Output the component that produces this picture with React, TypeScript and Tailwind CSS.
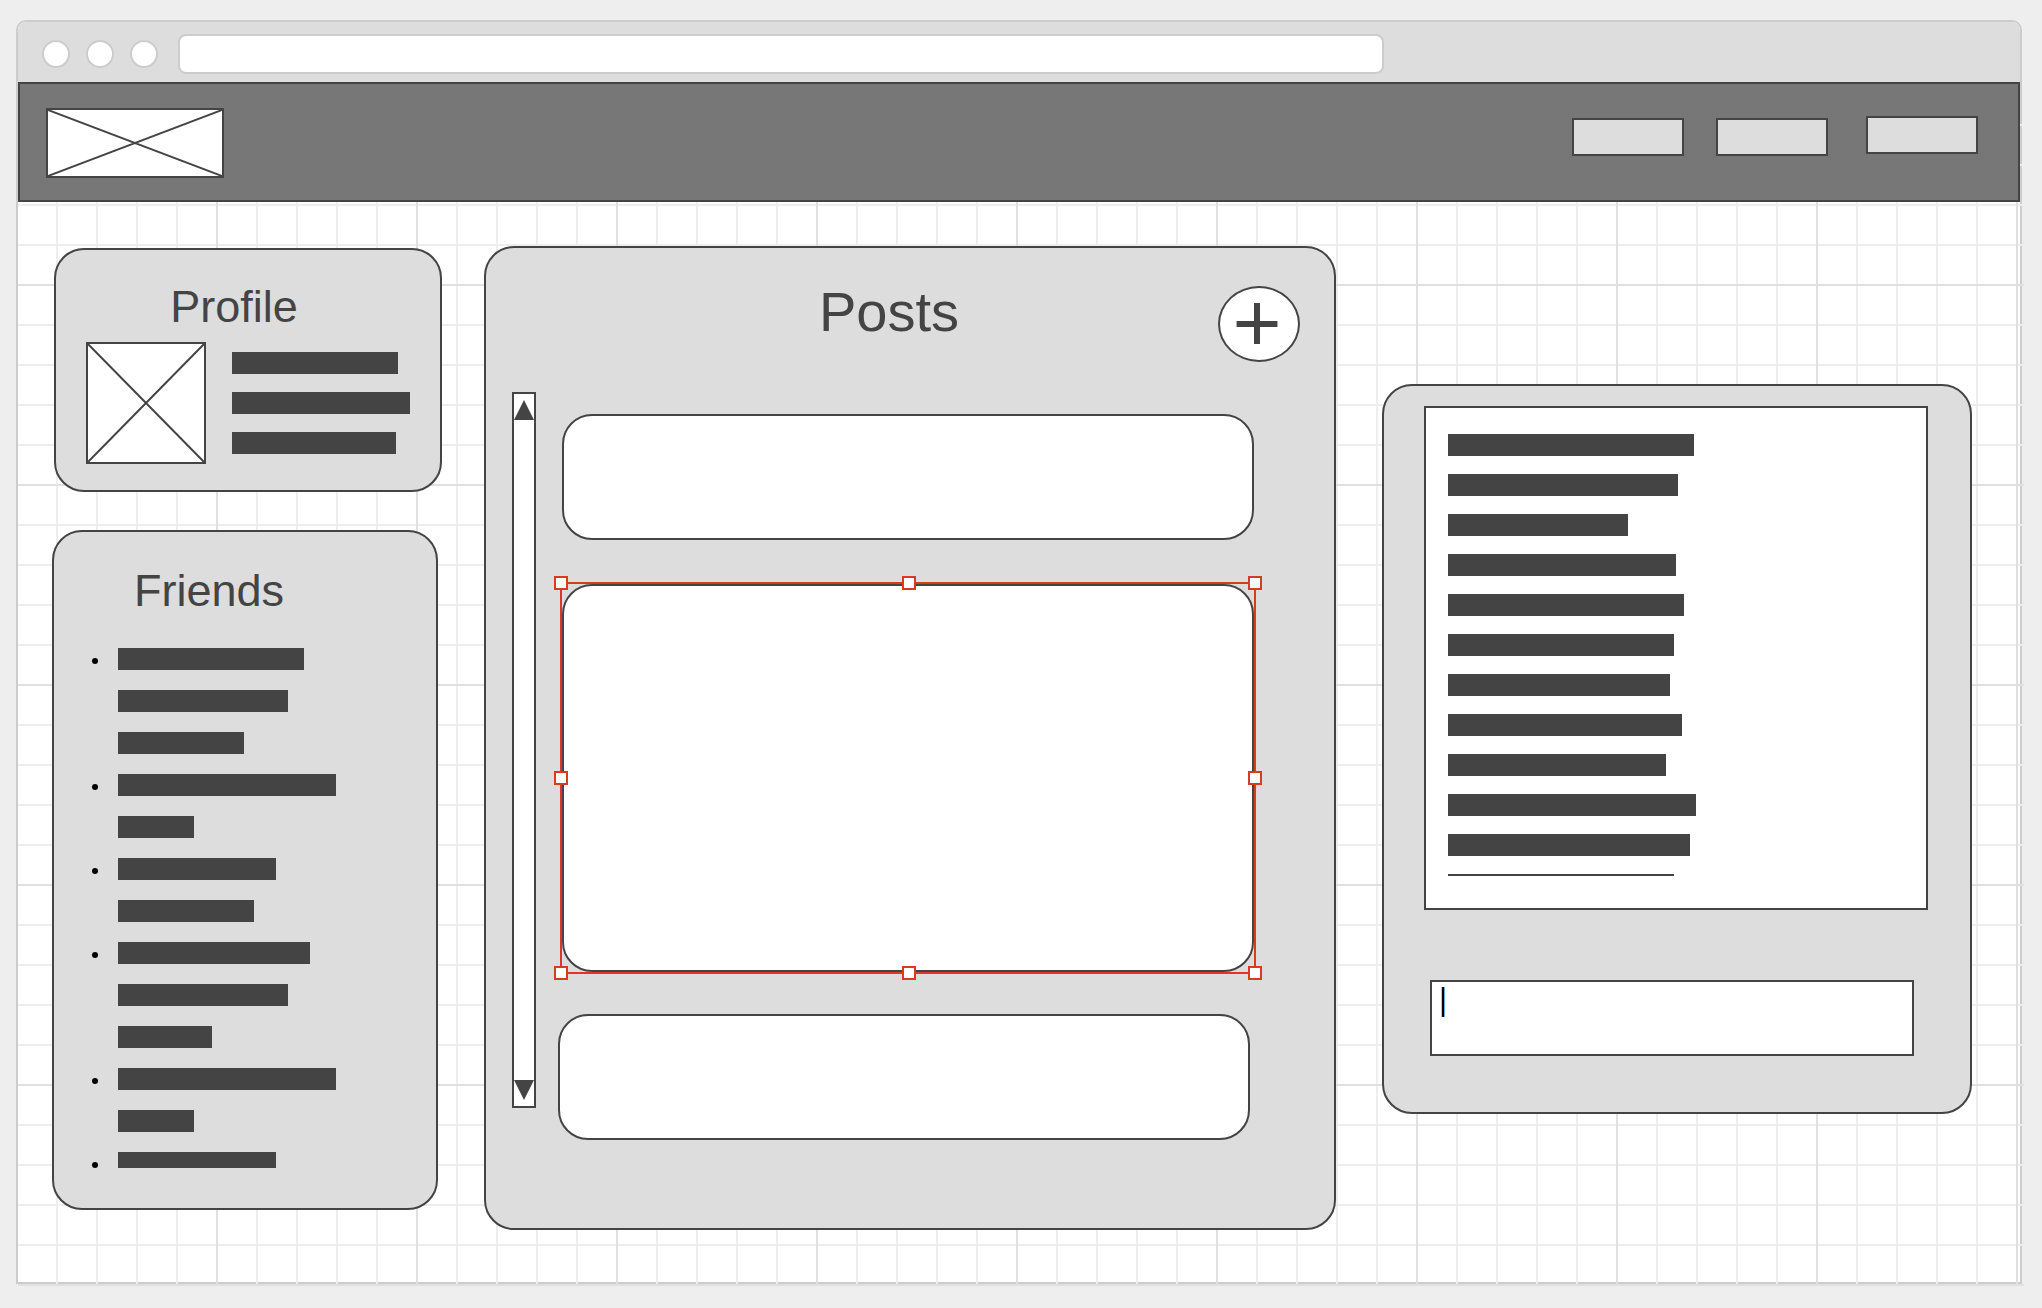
import React from "react";

const PROFILE_LINES = [166, 178, 164];

const FRIENDS = [
  [186, 170, 126],
  [218, 76],
  [158, 136],
  [192, 170, 94],
  [218, 76],
  [158],
];

const CHAT_LINES = [246, 230, 180, 228, 236, 226, 222, 234, 218, 248, 242, 226];

const HANDLES = [
  "-left-2 -top-2",
  "left-1/2 -ml-[6px] -top-2",
  "-right-2 -top-2",
  "-left-2 top-1/2 -mt-[7px]",
  "-right-2 top-1/2 -mt-[7px]",
  "-left-2 -bottom-2",
  "left-1/2 -ml-[6px] -bottom-2",
  "-right-2 -bottom-2",
];

function Line({ width }: { width: number }) {
  return <div className="h-[22px] max-w-full shrink-0 bg-[#444]" style={{ width }} />;
}

function CrossedBox({ className, label }: { className: string; label: string }) {
  return (
    <div className={`shrink-0 border-2 border-[#444] bg-white ${className}`}>
      <svg
        role="img"
        aria-label={label}
        className="block h-full w-full"
        viewBox="0 0 100 100"
        preserveAspectRatio="none"
        stroke="#444"
        strokeWidth="2"
      >
        <path d="M0 0 100 100M100 0 0 100" vectorEffect="non-scaling-stroke" />
      </svg>
    </div>
  );
}

function BrowserBar() {
  return (
    <div className="flex h-16 items-start rounded-t-lg bg-[#ddd] pl-6 pt-3">
      <div className="flex gap-4 pt-[6px]">
        <button aria-label="Close" className="size-7 rounded-full border-2 border-[#ccc] bg-white" />
        <button aria-label="Minimize" className="size-7 rounded-full border-2 border-[#ccc] bg-white" />
        <button aria-label="Maximize" className="size-7 rounded-full border-2 border-[#ccc] bg-white" />
      </div>
      <input
        type="text"
        aria-label="Address"
        className="ml-5 h-10 w-[1206px] rounded-lg border-2 border-[#ccc] bg-white px-3 outline-none"
      />
    </div>
  );
}

function SiteHeader() {
  return (
    <header className="-mt-1 mr-1 flex h-[120px] items-start justify-between border-2 border-[#444] bg-[#777] pl-[26px] pr-10 pt-6">
      <CrossedBox label="Logo" className="h-[70px] w-[178px]" />
      <nav className="flex items-start pt-2">
        <button aria-label="Link 1" className="mt-[2px] h-[38px] w-28 border-2 border-[#444] bg-[#ddd]" />
        <button aria-label="Link 2" className="ml-8 mt-[2px] h-[38px] w-28 border-2 border-[#444] bg-[#ddd]" />
        <button aria-label="Link 3" className="ml-[38px] h-[38px] w-28 border-2 border-[#444] bg-[#ddd]" />
      </nav>
    </header>
  );
}

function ProfileCard() {
  return (
    <section className="ml-[2px] rounded-[30px] border-2 border-[#444] bg-[#ddd] pb-[26px] pt-[30px]">
      <h2 className="pr-7 text-center text-[45px] leading-[54px]">Profile</h2>
      <div className="mt-2 flex gap-[26px] pl-[30px]">
        <CrossedBox label="Profile picture" className="h-[122px] w-[120px]" />
        <div className="flex flex-col gap-[18px] pt-[10px]">
          {PROFILE_LINES.map((w, i) => (
            <Line key={i} width={w} />
          ))}
        </div>
      </div>
    </section>
  );
}

function FriendsCard() {
  return (
    <section className="mr-1 mt-[38px] rounded-[30px] border-2 border-[#444] bg-[#ddd] pb-10 pt-8">
      <h2 className="pr-[72px] text-center text-[45px] leading-[54px]">Friends</h2>
      <ul className="mt-[30px] flex h-[520px] flex-col gap-5 overflow-hidden pl-[38px]">
        {FRIENDS.map((lines, i) => (
          <li key={i} className="flex shrink-0 gap-5">
            <span className="mt-[10px] size-[6px] rounded-full bg-black" />
            <div className="flex flex-col gap-5">
              {lines.map((w, j) => (
                <Line key={j} width={w} />
              ))}
            </div>
          </li>
        ))}
      </ul>
    </section>
  );
}

function ScrollBar() {
  return (
    <div className="mb-8 ml-[26px] flex w-6 shrink-0 flex-col justify-between border-2 border-[#444] bg-white py-[6px]">
      <button aria-label="Scroll up" className="block">
        <svg viewBox="0 0 20 20" className="block size-5" fill="#444">
          <path d="M10 0 20 20H0z" />
        </svg>
      </button>
      <button aria-label="Scroll down" className="block">
        <svg viewBox="0 0 20 20" className="block size-5" fill="#444">
          <path d="M10 20 0 0h20z" />
        </svg>
      </button>
    </div>
  );
}

function PostsCard() {
  return (
    <section className="min-w-0 flex-1 rounded-[30px] border-2 border-[#444] bg-[#ddd] pb-[88px] pt-8">
      <div className="flex items-start pr-[34px]">
        <h2 className="flex-1 pl-[74px] text-center text-[56px] leading-[64px]">Posts</h2>
        <button
          aria-label="Add post"
          className="mt-[6px] flex h-[76px] w-[82px] shrink-0 items-center justify-center rounded-[50%] border-2 border-[#444] bg-white pb-1 pr-1 text-[84px] leading-[64px]"
        >
          +
        </button>
      </div>
      <div className="mt-[30px] flex">
        <ScrollBar />
        <div className="ml-[26px] mr-20 flex min-w-0 flex-1 flex-col pt-[22px]">
          <article className="h-[126px] rounded-[30px] border-2 border-[#444] bg-white" />
          <article className="relative mt-11 h-[388px] rounded-[30px] border-2 border-[#444] bg-white">
            <div className="absolute -inset-1 border-2 border-[#d63c22]">
              {HANDLES.map((place) => (
                <span key={place} className={`absolute size-[14px] border-2 border-[#d63c22] bg-white ${place}`} />
              ))}
            </div>
          </article>
          <article className="-ml-1 mr-1 mt-[42px] h-[126px] rounded-[30px] border-2 border-[#444] bg-white" />
        </div>
      </div>
    </section>
  );
}

function ChatCard() {
  return (
    <aside className="ml-1 mt-[138px] w-[590px] shrink-0 rounded-[30px] border-2 border-[#444] bg-[#ddd] pb-14 pt-5">
      <div className="ml-10 mr-[42px] h-[504px] border-2 border-[#444] bg-white pl-[22px] pt-[26px]">
        <div className="flex h-[442px] flex-col gap-[18px] overflow-hidden">
          {CHAT_LINES.map((w, i) => (
            <Line key={i} width={w} />
          ))}
        </div>
      </div>
      <div className="ml-[46px] mr-14 mt-[70px] flex">
        <textarea
          aria-label="Message"
          defaultValue="|"
          className="h-[76px] flex-1 resize-none overflow-hidden border-2 border-[#444] bg-white pl-[7px] text-[31px] leading-9 text-black outline-none"
        />
      </div>
    </aside>
  );
}

export default function App() {
  return (
    <div className="flex min-h-screen flex-col bg-[#eee] pb-6 pl-4 pr-5 pt-5 font-['Liberation_Sans',Arial,sans-serif] text-[#444]">
      <div className="flex flex-1 flex-col rounded-t-[10px] border-2 border-[#ccc] bg-white">
        <BrowserBar />
        <div className="-mb-1 -mr-1 flex-1 bg-[image:linear-gradient(to_right,#e0e0e0_2px,transparent_2px),linear-gradient(#e0e0e0_2px,transparent_2px),linear-gradient(to_right,#eee_2px,transparent_2px),linear-gradient(#eee_2px,transparent_2px)] bg-[length:200px_200px,200px_200px,40px_40px,40px_40px] bg-[position:198px_198px,198px_198px,38px_38px,38px_38px]">
          <SiteHeader />
          <main className="flex items-start gap-[42px] pl-[34px] pr-[52px] pt-11">
            <div className="mt-[2px] w-[390px] shrink-0">
              <ProfileCard />
              <FriendsCard />
            </div>
            <PostsCard />
            <ChatCard />
          </main>
        </div>
      </div>
    </div>
  );
}
